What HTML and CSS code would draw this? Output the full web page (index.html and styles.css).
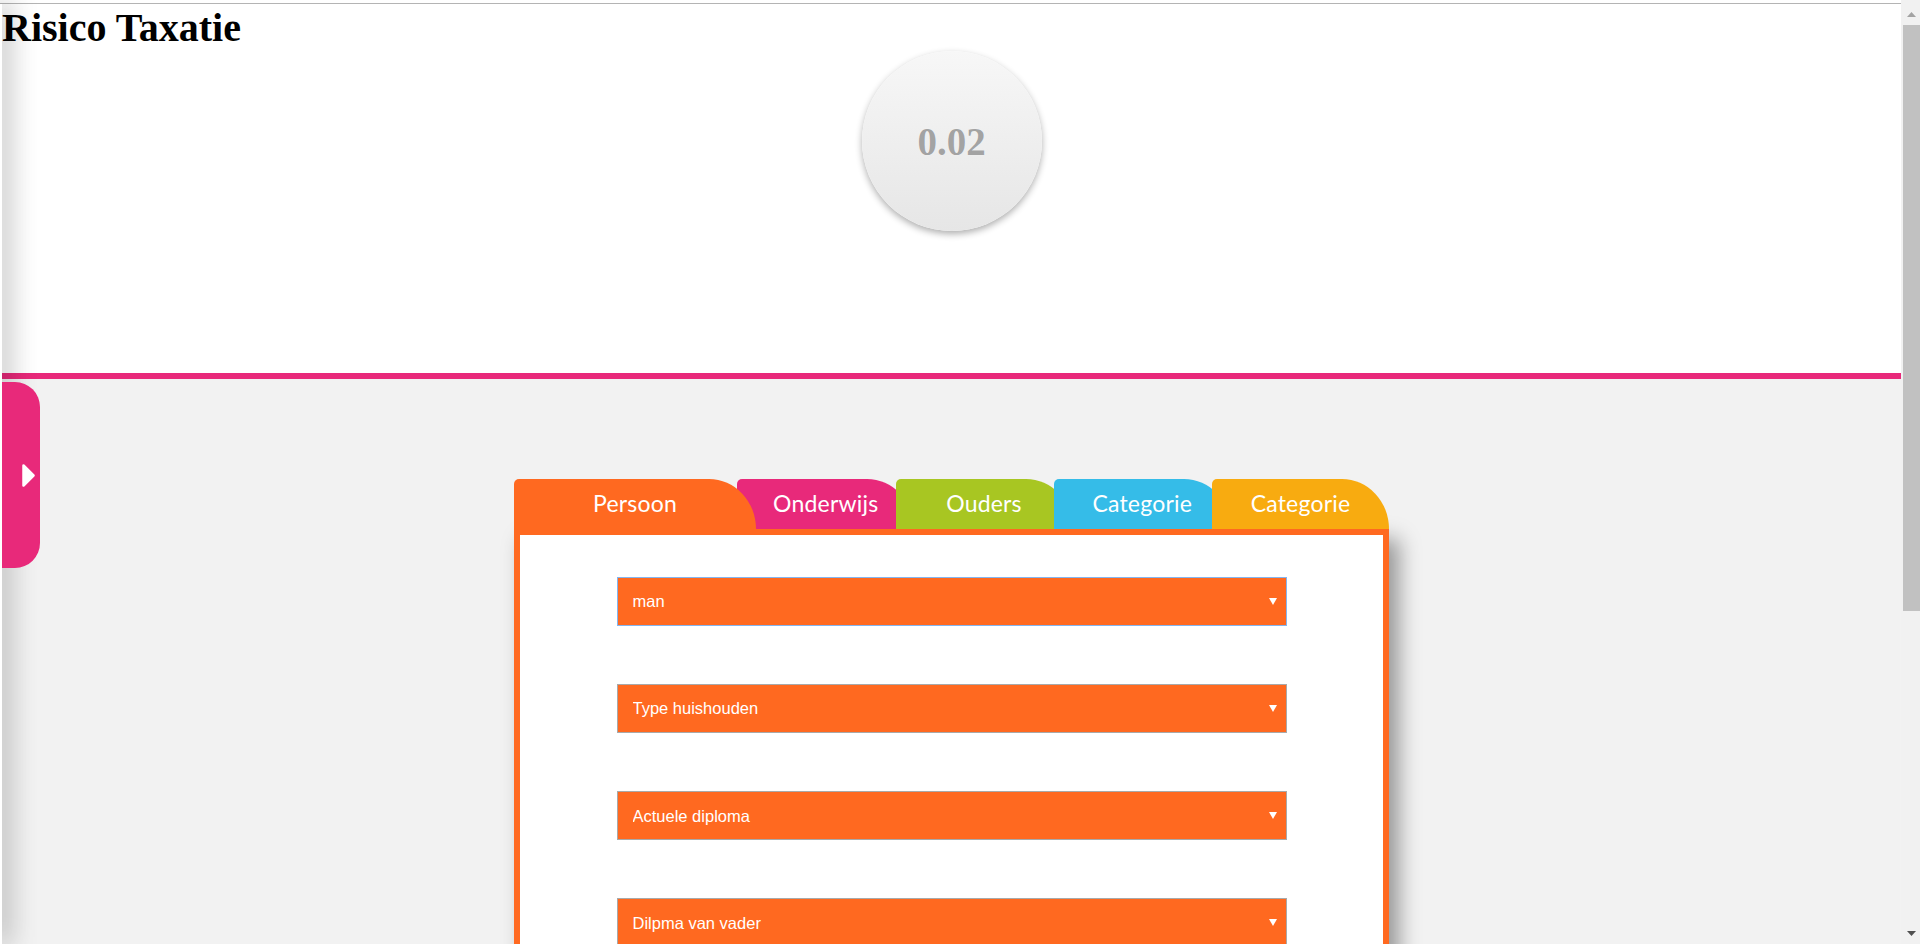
FILE: index.html
```html
<!DOCTYPE html>
<html lang="nl">
<head>
<meta charset="utf-8">
<title>Risico Taxatie</title>
<link rel="stylesheet" href="styles.css">
</head>
<body>
<div class="page">
  <div class="topgap"></div>
  <header class="hero">
    <h1 class="title">Risico Taxatie</h1>
    <div class="score"><span class="score-value">0.02</span></div>
  </header>
  <div class="pinkline"></div>
  <main class="main">
    <div class="panel">
      <nav class="tabs">
        <div class="tab tab-orange">Persoon</div>
        <div class="tab tab-pink">Onderwijs</div>
        <div class="tab tab-green">Ouders</div>
        <div class="tab tab-blue">Categorie</div>
        <div class="tab tab-yellow">Categorie</div>
      </nav>
      <div class="box">
        <label class="field field-focus">
          <select class="select"><option>man</option><option>vrouw</option></select>
          <svg class="caret" width="8" height="7" viewBox="0 0 8 7"><polygon points="0,0 8,0 4,7" fill="#fff"/></svg>
        </label>
        <label class="field">
          <select class="select"><option>Type huishouden</option></select>
          <svg class="caret" width="8" height="7" viewBox="0 0 8 7"><polygon points="0,0 8,0 4,7" fill="#fff"/></svg>
        </label>
        <label class="field">
          <select class="select"><option>Actuele diploma</option></select>
          <svg class="caret" width="8" height="7" viewBox="0 0 8 7"><polygon points="0,0 8,0 4,7" fill="#fff"/></svg>
        </label>
        <label class="field">
          <select class="select"><option>Dilpma van vader</option></select>
          <svg class="caret" width="8" height="7" viewBox="0 0 8 7"><polygon points="0,0 8,0 4,7" fill="#fff"/></svg>
        </label>
        <label class="field">
          <select class="select"><option>Dilpma van moeder</option></select>
          <svg class="caret" width="8" height="7" viewBox="0 0 8 7"><polygon points="0,0 8,0 4,7" fill="#fff"/></svg>
        </label>
      </div>
    </div>
  </main>
  <div class="drawer"></div>
  <div class="toggle">
    <svg width="13" height="23" viewBox="0 0 13 23"><polygon points="1.5,1.5 11.5,11.5 1.5,21.5" fill="#fff" stroke="#fff" stroke-width="2.5" stroke-linejoin="round"/></svg>
  </div>
</div>
<div class="scrollbar">
  <div class="sb-up"><svg width="9" height="5" viewBox="0 0 9 5"><polygon points="0,5 4.5,0 9,5" fill="#a3a3a3"/></svg></div>
  <div class="sb-thumb"></div>
  <div class="sb-track"></div>
  <div class="sb-down"><svg width="9" height="5" viewBox="0 0 9 5"><polygon points="0,0 9,0 4.5,5" fill="#505050"/></svg></div>
</div>
</body>
</html>
```

FILE: styles.css
```css
html, body {
  margin: 0;
  height: 100%;
}
body {
  display: flex;
  overflow: hidden;
  background: #fff;
  font-family: "Liberation Serif", "Times New Roman", serif;
}
.page {
  flex: 1;
  position: relative;
  height: 944px;
  overflow: hidden;
  display: flex;
  flex-direction: column;
}
.topgap {
  height: 3px;
  flex: none;
  background: #fff;
  border-bottom: 1px solid #b4b4b4;
}
.hero {
  flex: none;
  height: 369px;
  background: #fff;
  padding-left: 2px;
  display: flex;
  flex-direction: column;
  align-items: center;
}
.title {
  align-self: flex-start;
  margin: 0;
  font-size: 40px;
  line-height: 47px;
  font-weight: bold;
  color: #000;
}
.score {
  margin-top: 0;
  width: 180px;
  height: 180px;
  border-radius: 50%;
  background: linear-gradient(#f7f7f7, #e6e6e6);
  box-shadow: 0 3px 7px rgba(0, 0, 0, 0.32);
  display: flex;
  align-items: center;
  justify-content: center;
}
.score-value {
  font-size: 39px;
  font-weight: bold;
  color: #a3a3a3;
  text-shadow: 0 0 1px #fff;
}
.pinkline {
  flex: none;
  height: 6px;
  background: #e8297a;
}
.main {
  flex: 1;
  background: #f2f2f2;
  padding: 100px 0 0 2px;
}
.panel {
  width: 875px;
  margin: 0 auto;
}
.tabs {
  display: flex;
  height: 50px;
}
.tab {
  flex: none;
  width: 177px;
  height: 50px;
  margin-left: -18.75px;
  border-radius: 5px 47px 0 0 / 5px 50px 0 0;
  color: #fff;
  font-family: "Lato", "Noto Sans", sans-serif;
  font-size: 23px;
  letter-spacing: 0.2px;
  display: flex;
  align-items: center;
  justify-content: center;
  padding-bottom: 2px;
  box-sizing: border-box;
}
.tab-orange {
  width: 242px;
  margin-left: 0;
  position: relative;
  z-index: 1;
  background: #ff6920;
}
.tab-pink { background: #e8297a; }
.tab-green { background: #a8c622; }
.tab-blue { background: #35bce8; }
.tab-yellow { background: #f8ab10; }
.box {
  border: 6px solid #ff6920;
  background: #fff;
  box-shadow: 10px 10px 20px rgba(0, 0, 0, 0.38);
  padding: 41.7px 0 60px;
  display: flex;
  flex-direction: column;
  align-items: center;
  gap: 58.2px;
}
.field {
  width: 670px;
  height: 49px;
  box-sizing: border-box;
  border: 1px solid #a9a9a9;
  background: #ff6920;
  display: flex;
  align-items: center;
  padding: 0 9px 0 15px;
}
.field-focus {
  border-color: #84b5ef;
}
.select {
  flex: 1;
  appearance: none;
  -webkit-appearance: none;
  background: transparent;
  border: 0;
  outline: none;
  padding: 0;
  margin: 0;
  color: #fff;
  font-family: "Liberation Sans", Arial, sans-serif;
  font-size: 16.5px;
}
.caret {
  flex: none;
}
.drawer {
  position: absolute;
  left: 0;
  top: 4px;
  bottom: 0;
  width: 2px;
  background: #fff;
  box-shadow: 0 0 28px 2px rgba(0, 0, 0, 0.75);
}
.toggle {
  position: absolute;
  left: 2px;
  top: 382px;
  width: 38px;
  height: 186px;
  box-sizing: border-box;
  padding-left: 20px;
  background: #e8297a;
  border-radius: 0 25px 25px 0;
  display: flex;
  align-items: center;
}
.toggle svg {
  display: block;
}
.scrollbar {
  flex: none;
  width: 19px;
  height: 944px;
  background: #f1f1f1;
  display: flex;
  flex-direction: column;
}
.sb-up {
  height: 25px;
  flex: none;
  display: flex;
  justify-content: center;
  align-items: flex-start;
  padding-left: 2px;
  box-sizing: border-box;
}
.sb-up svg {
  margin-top: 12px;
}
.sb-thumb {
  flex: none;
  height: 586px;
  margin-left: 2px;
  background: #c1c1c1;
}
.sb-track {
  flex: 1;
}
.sb-down {
  height: 21px;
  flex: none;
  display: flex;
  justify-content: center;
  align-items: center;
  padding-left: 2px;
  box-sizing: border-box;
}
```
